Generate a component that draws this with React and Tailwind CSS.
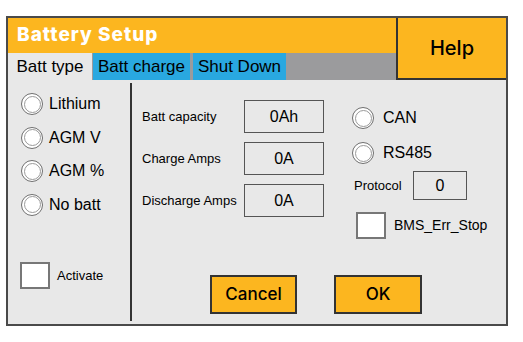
import React from "react";

const Radio = ({ label, className = "" }) => (
  <div className={`flex items-center gap-[6px] h-[22px] ${className}`}>
    <div className="w-[22px] h-[22px] rounded-full border border-[#6f6f6f] p-[1.5px] bg-white">
      <div className="w-full h-full rounded-full border border-[#9a9a9a] bg-white"></div>
    </div>
    <span className="text-[16px] text-black">{label}</span>
  </div>
);

const Field = ({ label, value }) => (
  <div className="flex items-center h-[33px]">
    <span className="w-[102px] text-[13px] text-black">{label}</span>
    <div className="w-[80px] h-[33px] border-[1.5px] border-[#555] flex items-center justify-center text-[16px] text-black">
      {value}
    </div>
  </div>
);

const Check = () => (
  <div className="w-[30px] h-[27px] border-2 border-[#777] bg-white"></div>
);

export default function App() {
  return (
    <div
      className="pt-[16px] pl-[6px] bg-white w-[523px] h-[342px]"
      style={{ fontFamily: '"Liberation Sans", Arial, sans-serif' }}
    >
      <div className="w-[502px] h-[310px] border-2 border-[#4a4a4a] flex flex-col bg-[#e8e8e8]">
        <div className="flex h-[62px]">
          <div className="flex-1 flex flex-col">
            <div className="h-[35px] bg-[#fcb61f] flex items-center pl-[9px]">
              <span className="text-white font-extrabold text-[19px] tracking-[1px]" style={{ fontFamily: 'Inter, sans-serif' }}>
                Battery Setup
              </span>
            </div>
            <div className="h-[27px] bg-[#9b9b9d] flex items-stretch">
              <div className="w-[84px] bg-[#e8e8e8] flex items-center justify-center text-[17px] text-black">
                Batt type
              </div>
              <div className="ml-[1px] w-[97px] bg-[#29a8e0] flex items-center justify-center text-[17px] text-black">
                Batt charge
              </div>
              <div className="ml-[3px] w-[93px] bg-[#29a8e0] flex items-center justify-center text-[17px] text-black">
                Shut Down
              </div>
            </div>
          </div>
          <div className="w-[110px] bg-[#fcb61f] border-l-2 border-b-2 border-[#333] flex items-center justify-center text-[20px] font-medium text-black" style={{ fontFamily: 'Inter, sans-serif' }}>
            Help
          </div>
        </div>
        <div className="flex-1 flex">
          <div className="w-[122px] flex flex-col pt-[13px] pl-[13px] pb-[35px]">
            <div className="flex flex-col gap-[11.5px]">
              <Radio label="Lithium" />
              <Radio label="AGM V" />
              <Radio label="AGM %" />
              <Radio label="No batt" />
            </div>
            <div className="mt-auto flex items-center gap-[7px] -ml-[1px]">
              <Check />
              <span className="text-[13px] text-black">Activate</span>
            </div>
          </div>
          <div className="w-[2px] bg-[#333] my-[3px]"></div>
          <div className="flex-1 flex flex-col">
            <div className="flex">
              <div className="pt-[20px] pl-[10px] flex flex-col gap-[9px]">
                <Field label="Batt capacity" value="0Ah" />
                <Field label="Charge Amps" value="0A" />
                <Field label="Discharge Amps" value="0A" />
              </div>
              <div className="ml-[28px] pt-[27px] flex flex-col">
                <Radio label="CAN" className="gap-[9px]" />
                <Radio label="RS485" className="gap-[9px] mt-[13px]" />
                <div className="flex items-center mt-[7px] pl-[2px]">
                  <span className="w-[59px] text-[13px] text-black">Protocol</span>
                  <div className="w-[54px] h-[29px] border-[1.5px] border-[#555] flex items-center justify-center text-[16px] text-black">
                    0
                  </div>
                </div>
                <div className="flex items-center mt-[12px] ml-[4px] gap-[8px]">
                  <Check />
                  <span className="text-[14px] text-black">BMS_Err_Stop</span>
                </div>
              </div>
            </div>
            <div className="mt-auto pb-[10px] pl-[78px] flex gap-[37px]">
              <div className="w-[87px] h-[39px] bg-[#fcb61f] border-2 border-[#333] flex items-center justify-center text-[17px] font-medium text-black" style={{ fontFamily: 'Inter, sans-serif' }}>
                Cancel
              </div>
              <div className="w-[88px] h-[39px] bg-[#fcb61f] border-2 border-[#333] flex items-center justify-center text-[17px] font-medium text-black" style={{ fontFamily: 'Inter, sans-serif' }}>
                OK
              </div>
            </div>
          </div>
        </div>
      </div>
    </div>
  );
}
